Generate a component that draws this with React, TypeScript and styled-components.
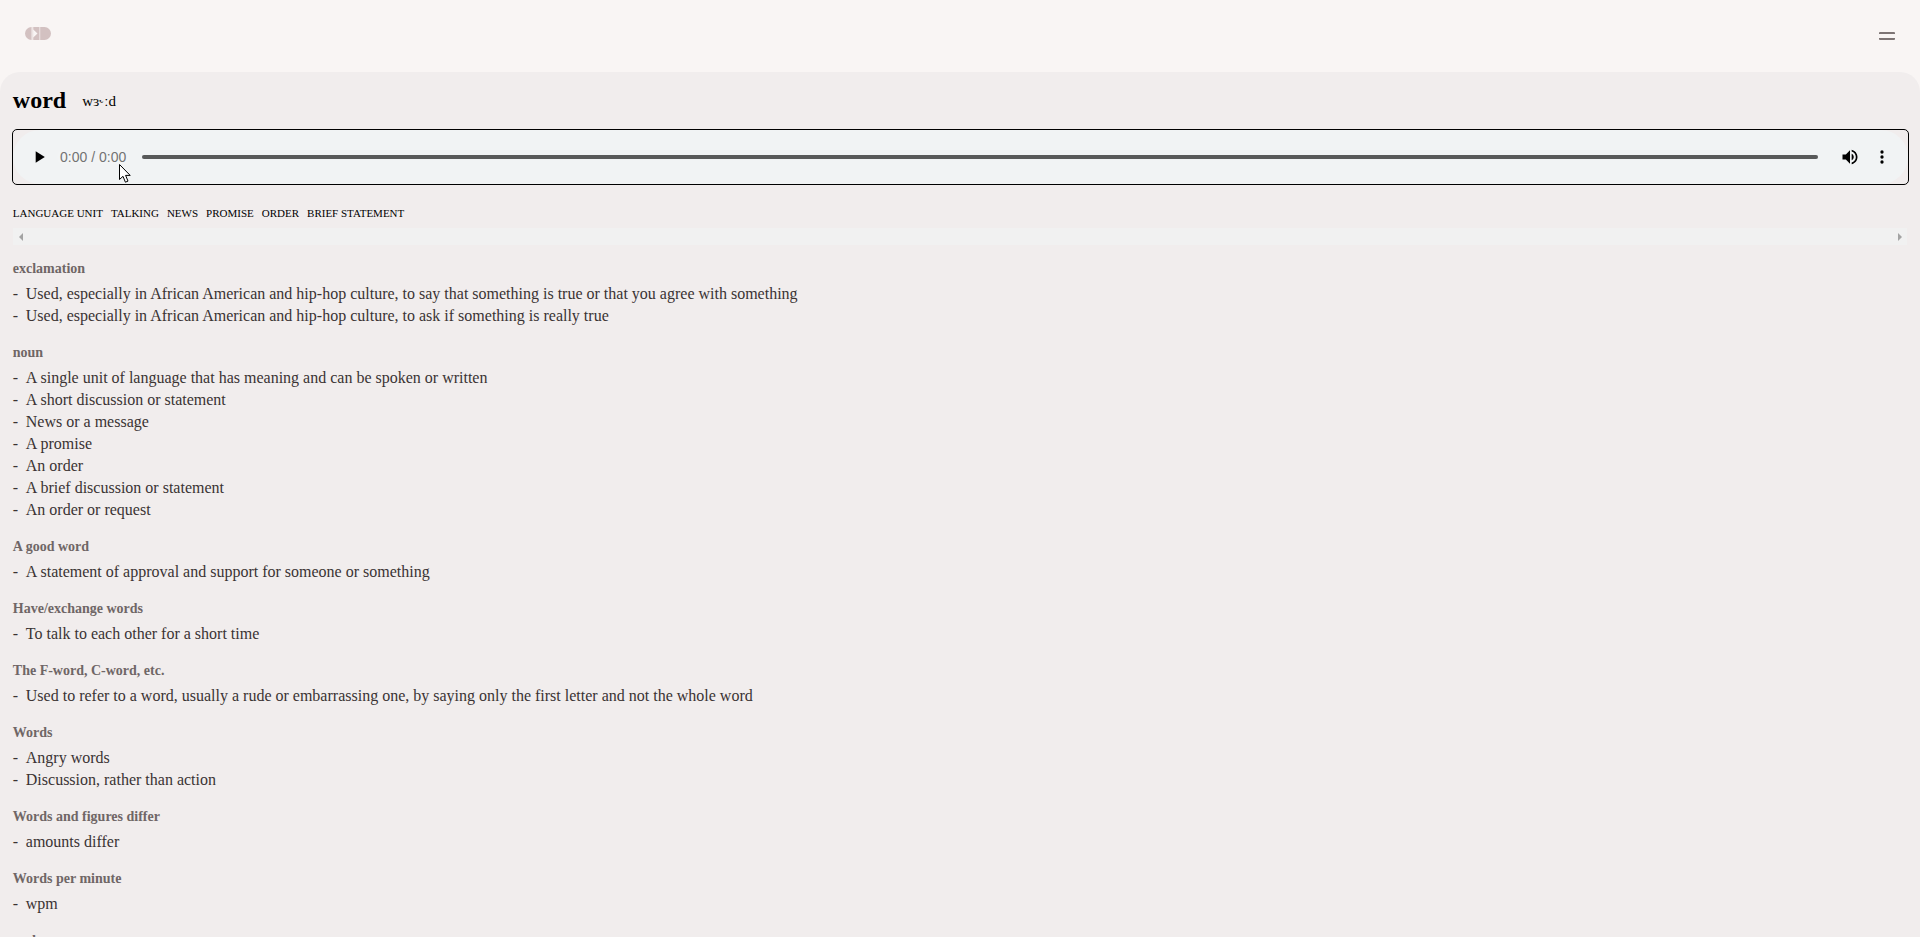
import React, { useMemo } from 'react';
import styled, { createGlobalStyle } from 'styled-components';

type Entry = {
  heading: string;
  meanings: string[];
};

const tags = ['LANGUAGE UNIT', 'TALKING', 'NEWS', 'PROMISE', 'ORDER', 'BRIEF STATEMENT'];

const entries: Entry[] = [
  {
    heading: 'exclamation',
    meanings: [
      'Used, especially in African American and hip-hop culture, to say that something is true or that you agree with something',
      'Used, especially in African American and hip-hop culture, to ask if something is really true',
    ],
  },
  {
    heading: 'noun',
    meanings: [
      'A single unit of language that has meaning and can be spoken or written',
      'A short discussion or statement',
      'News or a message',
      'A promise',
      'An order',
      'A brief discussion or statement',
      'An order or request',
    ],
  },
  { heading: 'A good word', meanings: ['A statement of approval and support for someone or something'] },
  { heading: 'Have/exchange words', meanings: ['To talk to each other for a short time'] },
  {
    heading: 'The F-word, C-word, etc.',
    meanings: ['Used to refer to a word, usually a rude or embarrassing one, by saying only the first letter and not the whole word'],
  },
  { heading: 'Words', meanings: ['Angry words', 'Discussion, rather than action'] },
  { heading: 'Words and figures differ', meanings: ['amounts differ'] },
  { heading: 'Words per minute', meanings: ['wpm'] },
  { heading: 'verb', meanings: [] },
];

// a tenth of a second of silence, so the player has something to load
const makeSilentClip = (): string => {
  const samples = 800;
  const bytes = new Uint8Array(44 + samples).fill(128);
  const view = new DataView(bytes.buffer);
  const writeTag = (at: number, tag: string) => {
    tag.split('').forEach((char, i) => view.setUint8(at + i, char.charCodeAt(0)));
  };
  writeTag(0, 'RIFF');
  view.setUint32(4, 36 + samples, true);
  writeTag(8, 'WAVEfmt ');
  view.setUint32(16, 16, true);
  view.setUint16(20, 1, true);
  view.setUint16(22, 1, true);
  view.setUint32(24, 8000, true);
  view.setUint32(28, 8000, true);
  view.setUint16(32, 1, true);
  view.setUint16(34, 8, true);
  writeTag(36, 'data');
  view.setUint32(40, samples, true);
  return `data:audio/wav;base64,${btoa(String.fromCharCode(...bytes))}`;
};

const App: React.FC = () => {
  const clip = useMemo(makeSilentClip, []);

  return (
    <Page>
      <GlobalStyle />
      <Header>
        <Logo viewBox="0 0 26 13" aria-label="logo">
          <path d="M6.5 0 A6.5 6.5 0 0 0 6.5 13 Z" />
          <path d="M6.5 0 H8.3 V13 H6.5 Z" opacity="0.3" />
          <path d="M8.3 0 H14.5 V13 H8.3 V10.5 L12.5 6.5 L8.3 2.5 Z" />
          <path d="M15.2 0 H19.5 A6.5 6.5 0 0 1 19.5 13 H15.2 Z" />
        </Logo>
        <MenuButton aria-label="menu" />
      </Header>
      <Main>
        <TitleRow>
          <Title>word</Title>
          <Phonetic>wɜ˞ːd</Phonetic>
        </TitleRow>
        <Player controls src={clip} />
        <TagRow>
          {tags.map((tag) => (
            <Tag key={tag}>{tag}</Tag>
          ))}
        </TagRow>
        <ScrollTrack>
          <ScrollArrow side="left" />
          <ScrollArrow side="right" />
        </ScrollTrack>
        <Sections>
          {entries.map((entry) => (
            <Section key={entry.heading}>
              <Heading>{entry.heading}</Heading>
              {entry.meanings.map((meaning) => (
                <Meaning key={meaning}>
                  <Dash>-</Dash>
                  {meaning}
                </Meaning>
              ))}
            </Section>
          ))}
        </Sections>
      </Main>
      <Cursor viewBox="0 0 12 20">
        <path d="M0.5 0.5 V15.5 L4 12.3 L6.4 18.2 L9 17.1 L6.6 11.4 H11.2 Z" />
      </Cursor>
    </Page>
  );
};

export default App;

const GlobalStyle = createGlobalStyle`
  html, body {
    margin: 0;
    padding: 0;
    height: 100%;
    overflow: hidden;
    background: #f9f5f4;
  }
  body {
    font-family: "Liberation Serif", "Times New Roman", serif;
  }
`;

const Page = styled.div`
  position: relative;
  height: 937px;
  overflow: hidden;
  background: #f9f5f4;
`;

const Header = styled.header`
  display: flex;
  align-items: center;
  justify-content: space-between;
  height: 72px;
  padding: 0 25px 5px 25px;
  box-sizing: border-box;
`;

const Logo = styled.svg`
  width: 26px;
  height: 13px;
  fill: #d3c1c1;
`;

const MenuButton = styled.div`
  width: 16px;
  height: 4px;
  margin-top: 5px;
  border-top: 2px solid #7d7474;
  border-bottom: 2px solid #7d7474;
  border-radius: 1px;
`;

const Main = styled.main`
  height: 865px;
  padding: 0 12.8px;
  box-sizing: border-box;
  overflow: hidden;
  background: #f1eded;
  border-radius: 20px 20px 0 0;
`;

const TitleRow = styled.div`
  display: flex;
  align-items: baseline;
  gap: 16px;
  padding-top: 15px;
  height: 58px;
  box-sizing: border-box;
`;

const Title = styled.h1`
  margin: 0;
  font-size: 24px;
  font-weight: 700;
  color: #000;
`;

const Phonetic = styled.span`
  position: relative;
  top: -2px;
  font-size: 15px;
  color: #000;
`;

const Player = styled.audio`
  display: block;
  width: calc(100% + 1px);
  height: 54px;
  outline: 1px solid #000;
  border-radius: 4px;

  &::-webkit-media-controls-current-time-display,
  &::-webkit-media-controls-time-remaining-display {
    font-family: "Liberation Sans", Arial, sans-serif;
    color: #5f5f5f;
  }

  &::-webkit-media-controls-timeline {
    -webkit-appearance: none;
    appearance: none;
    background: linear-gradient(#000, #000) no-repeat center / calc(100% - 32px) 4px;
  }
`;

const TagRow = styled.div`
  display: flex;
  gap: 8px;
  margin-top: 22px;
`;

const Tag = styled.span`
  font-size: 11px;
  line-height: 14px;
  color: #000;
  white-space: nowrap;
`;

const ScrollTrack = styled.div`
  display: flex;
  align-items: center;
  justify-content: space-between;
  height: 17px;
  margin-top: 8px;
  padding: 0 5.5px 0 6px;
  box-sizing: border-box;
  background: #f1f1f1;
`;

const ScrollArrow = styled.span<{ side: 'left' | 'right' }>`
  width: 0;
  height: 0;
  border-top: 4px solid transparent;
  border-bottom: 4px solid transparent;
  border-${(props) => (props.side === 'left' ? 'right' : 'left')}: 4px solid #a3a3a3;
`;

const Sections = styled.div`
  margin-top: 16px;
`;

const Section = styled.section`
  margin-bottom: 18px;
`;

const Heading = styled.h2`
  margin: 0 0 6px;
  font-size: 14px;
  line-height: 16px;
  font-weight: 700;
  color: #6f6666;
`;

const Meaning = styled.div`
  font-size: 16px;
  line-height: 22px;
  color: #3a3333;
`;

const Dash = styled.span`
  display: inline-block;
  width: 13px;
`;

const Cursor = styled.svg`
  position: absolute;
  left: 119px;
  top: 164px;
  width: 12px;
  height: 20px;
  fill: #fff;
  stroke: #000;
  stroke-width: 1;
`;
